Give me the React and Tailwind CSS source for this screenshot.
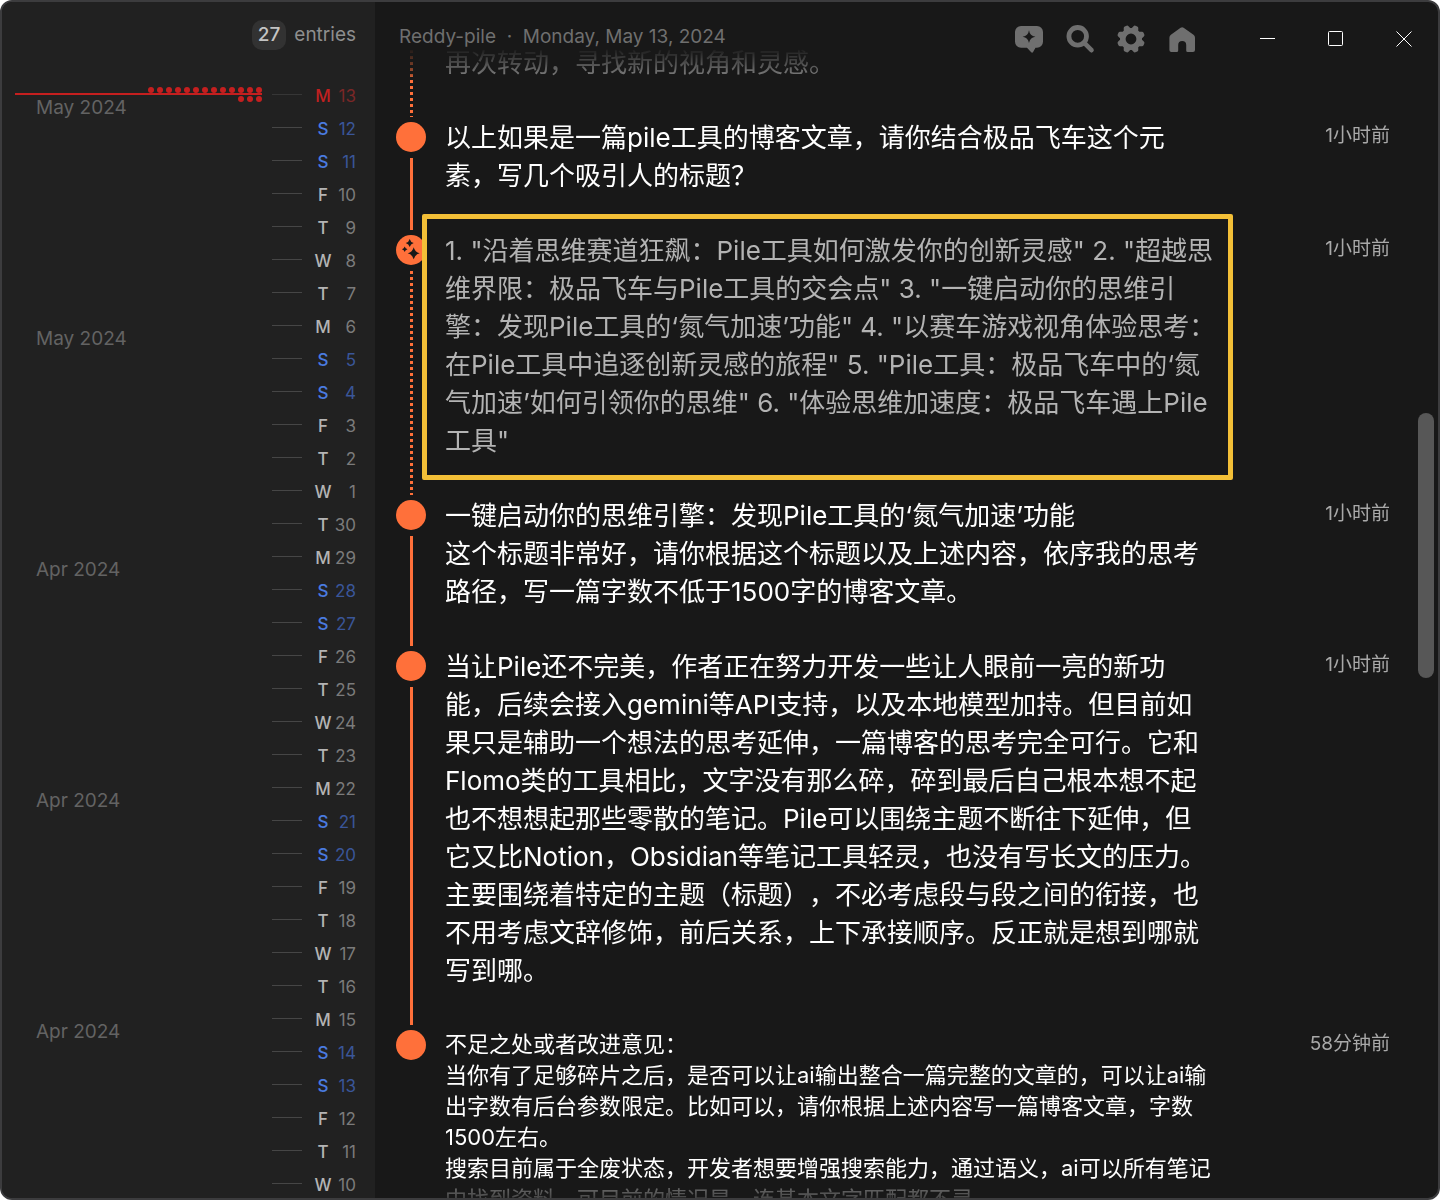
import React from 'react';

const days = [
  ['M', 13], ['S', 12], ['S', 11], ['F', 10], ['T', 9], ['W', 8], ['T', 7],
  ['M', 6], ['S', 5], ['S', 4], ['F', 3], ['T', 2], ['W', 1], ['T', 30],
  ['M', 29], ['S', 28], ['S', 27], ['F', 26], ['T', 25], ['W', 24], ['T', 23],
  ['M', 22], ['S', 21], ['S', 20], ['F', 19], ['T', 18], ['W', 17], ['T', 16],
  ['M', 15], ['S', 14], ['S', 13], ['F', 12], ['T', 11], ['W', 10],
];

const weeks = ['May 2024', 'May 2024', 'Apr 2024', 'Apr 2024', 'Apr 2024'].map((label, i) => ({
  label,
  days: days.slice(i * 7, i * 7 + 7),
}));

const posts = [
  {
    ai: true,
    continued: true,
    lines: ['再次转动，寻找新的视角和灵感。'],
  },
  {
    time: '1小时前',
    lines: ['以上如果是一篇pile工具的博客文章，请你结合极品飞车这个元', '素，写几个吸引人的标题？'],
  },
  {
    ai: true,
    time: '1小时前',
    highlighted: true,
    lines: [
      '1. "沿着思维赛道狂飙：Pile工具如何激发你的创新灵感" 2. "超越思',
      '维界限：极品飞车与Pile工具的交会点" 3. "一键启动你的思维引',
      '擎：发现Pile工具的‘氮气加速’功能" 4. "以赛车游戏视角体验思考：',
      '在Pile工具中追逐创新灵感的旅程" 5. "Pile工具：极品飞车中的‘氮',
      '气加速’如何引领你的思维" 6. "体验思维加速度：极品飞车遇上Pile',
      '工具"',
    ],
  },
  {
    time: '1小时前',
    lines: [
      '一键启动你的思维引擎：发现Pile工具的‘氮气加速’功能',
      '这个标题非常好，请你根据这个标题以及上述内容，依序我的思考',
      '路径，写一篇字数不低于1500字的博客文章。',
    ],
  },
  {
    time: '1小时前',
    lines: [
      '当让Pile还不完美，作者正在努力开发一些让人眼前一亮的新功',
      '能，后续会接入gemini等API支持，以及本地模型加持。但目前如',
      '果只是辅助一个想法的思考延伸，一篇博客的思考完全可行。它和',
      'Flomo类的工具相比，文字没有那么碎，碎到最后自己根本想不起',
      '也不想想起那些零散的笔记。Pile可以围绕主题不断往下延伸，但',
      '它又比Notion，Obsidian等笔记工具轻灵，也没有写长文的压力。',
      '主要围绕着特定的主题（标题），不必考虑段与段之间的衔接，也',
      '不用考虑文辞修饰，前后关系，上下承接顺序。反正就是想到哪就',
      '写到哪。',
    ],
  },
  {
    time: '58分钟前',
    small: true,
    last: true,
    lines: [
      '不足之处或者改进意见：',
      '当你有了足够碎片之后，是否可以让ai输出整合一篇完整的文章的，可以让ai输',
      '出字数有后台参数限定。比如可以，请你根据上述内容写一篇博客文章，字数',
      '1500左右。',
      '搜索目前属于全废状态，开发者想要增强搜索能力，通过语义，ai可以所有笔记',
      '中找到资料，可目前的情况是，连基本文字匹配都不灵',
    ],
  },
];

function ChatIcon() {
  return (
    <svg width="32" height="32" viewBox="0 0 32 32" fill="currentColor">
      <path
        fillRule="evenodd"
        d="M8 3h16a6 6 0 0 1 6 6v9.700a6 6 0 0 1-6 6h-1.500l-2.400 4.300q-.8 1.400-1.900.300l-4.200-4.600H8a6 6 0 0 1-6-6V9a6 6 0 0 1 6-6zM16 7.300q.8 5.600 6.400 6.400-5.600.8-6.400 6.400-.8-5.600-6.400-6.400 5.600-.8 6.400-6.400z"
      />
    </svg>
  );
}

function SearchIcon() {
  return (
    <svg width="32" height="32" viewBox="0 0 32 32" fill="none" stroke="currentColor" strokeLinecap="round">
      <circle cx="13.700" cy="13.300" r="8.800" strokeWidth="4.800" />
      <path d="M20.500 20.200l7 7" strokeWidth="4.600" />
    </svg>
  );
}

function GearIcon() {
  return (
    <svg width="32" height="32" viewBox="0 0 32 32" fill="currentColor">
      <circle cx="16" cy="16" r="8.200" fill="none" stroke="currentColor" strokeWidth="5.600" />
      {[22.5, 67.5, 112.5, 157.5, 202.5, 247.5, 292.5, 337.5].map((angle) => (
        <path key={angle} d="M11.800 7.500L13.400 3.200q.4-1.200 1.600-1.200h2q1.200 0 1.600 1.200l1.600 4.300z" transform={`rotate(${angle} 16 16)`} />
      ))}
    </svg>
  );
}

function HomeIcon() {
  return (
    <svg width="32" height="32" viewBox="0 0 32 32" fill="currentColor">
      <path d="M14.600 4.700q1.500-1.100 3 0l9.900 7q1.500 1.100 1.500 3V27q0 2-2 2h-5.200q-1.600 0-1.600-1.600V22a4 4 0 0 0-8 0v5.400q0 1.600-1.600 1.600H5.400q-2 0-2-2V14.700q0-1.900 1.500-3z" />
    </svg>
  );
}

function SparklesIcon() {
  return (
    <svg width="30" height="30" viewBox="0 0 30 30" fill="#181818">
      <path d="M17.700 12.300q1.200 4.800 6 6-4.800 1.200-6 6-1.200-4.800-6-6 4.800-1.200 6-6z" />
      <path d="M13.700 4q.8 3.200 4 4-3.200.8-4 4-.8-3.200-4-4 3.200-.8 4-4z" />
      <path d="M8.700 11.500q.6 2.200 2.800 2.800-2.200.6-2.800 2.800-.6-2.200-2.800-2.800 2.200-.6 2.800-2.800z" />
    </svg>
  );
}

function Day({ letter, date, today }) {
  const weekend = letter === 'S';
  const letterColor = today ? 'text-[#c22020]' : weekend ? 'text-[#4a7be0]' : 'text-[#b4b4b4]';
  const dateColor = today ? 'text-[#7a2727]' : weekend ? 'text-[#3a5699]' : 'text-[#7b7b7b]';

  return (
    <li className="flex h-[33px] items-center text-[17px] leading-6">
      <span className={`h-px w-[30px] ${today ? 'bg-[#363636]' : 'bg-[#464646]'}`} />
      <span className={`ml-3 w-[18px] pt-0.5 text-center font-medium ${letterColor}`}>{letter}</span>
      <span className={`w-6 pt-0.5 text-right ${dateColor}`}>{date}</span>
    </li>
  );
}

function Sidebar() {
  return (
    <aside className="relative flex w-[373px] shrink-0 flex-col overflow-hidden bg-[#212121]">
      <div className="flex h-[76px] shrink-0 items-start justify-end gap-2 pt-[18px] pr-[19px] text-[19px] leading-[30px] text-[#8e8e8e]">
        <span className="rounded-[10px] bg-[#323232] px-1.5 font-medium text-[#c4c4c4]">27</span>
        <span>entries</span>
      </div>

      {weeks.map((week, i) => (
        <section key={i} className="flex shrink-0 justify-between pr-[19px] pl-[34px]">
          <h2 className="pt-4 text-[19px] leading-7 text-[#636363]">{week.label}</h2>
          <ul className="w-[84px]">
            {week.days.map(([letter, date], n) => (
              <Day key={n} letter={letter} date={date} today={i === 0 && n === 0} />
            ))}
          </ul>
        </section>
      ))}

      {/* Scroll marker with a dot for each entry of the day */}
      <svg className="absolute top-[84px] left-[13px]" width="248" height="18" viewBox="0 0 248 18" fill="#c51f1f">
        <rect y="7" width="247" height="2" />
        {Array.from({ length: 13 }, (_, i) => (
          <circle key={i} cx={136 + i * 9} cy="4" r="3" />
        ))}
        {[226, 235, 244].map((x) => (
          <circle key={x} cx={x} cy="13" r="3" />
        ))}
      </svg>
    </aside>
  );
}

function Header() {
  return (
    <header className="flex h-[42px] shrink-0 items-start justify-between pt-[21px] pl-6 text-[#6f6f6f]">
      <h1 className="text-[19px] leading-7 whitespace-nowrap">Reddy-pile&nbsp; ·&nbsp; Monday, May 13, 2024</h1>
      <div className="flex">
        <nav className="flex gap-[19px] pr-9">
          <button aria-label="Chat"><ChatIcon /></button>
          <button aria-label="Search"><SearchIcon /></button>
          <button aria-label="Settings"><GearIcon /></button>
          <button aria-label="Home"><HomeIcon /></button>
        </nav>

        {/* Window controls */}
        <div className="flex text-white">
          <button aria-label="Minimize" className="flex h-8 w-[68px] items-center justify-center">
            <svg width="16" height="16" viewBox="0 0 16 16" stroke="currentColor"><path d="M0 7.500h15" /></svg>
          </button>
          <button aria-label="Maximize" className="flex h-8 w-[68px] items-center justify-center">
            <svg width="16" height="16" viewBox="0 0 16 16" fill="none" stroke="currentColor"><rect x=".5" y=".5" width="14" height="14" rx="1" /></svg>
          </button>
          <button aria-label="Close" className="flex h-8 w-[68px] items-center justify-center">
            <svg width="16" height="16" viewBox="0 0 16 16" stroke="currentColor"><path d="M.5.5l15 15M15.500.5l-15 15" /></svg>
          </button>
        </div>
      </div>
    </header>
  );
}

function Post({ post }) {
  return (
    <article className="relative flex">
      <div className="flex w-[30px] shrink-0 flex-col gap-1.5 pb-0.5">
        {!post.continued && (
          <span className="mt-[3px] size-[30px] shrink-0 rounded-full bg-[#ff703a]">{post.ai && <SparklesIcon />}</span>
        )}
        {!post.last && (
          <span
            className={`ml-3.5 w-[3px] grow ${post.ai ? 'bg-[repeating-linear-gradient(to_bottom,#ff703a_0_3px,transparent_3px_6px)]' : 'bg-[#ff703a]'}`}
          />
        )}
      </div>
      <p
        className={`ml-[19px] pb-[37px] whitespace-nowrap ${post.small ? 'pt-0.5 text-[22px] leading-[31px]' : 'text-[26px] leading-[38px]'} ${post.ai ? 'text-[#b3b3b3]' : 'text-white'}`}
      >
        {post.lines.map((line) => (
          <span key={line} className="block">{line}</span>
        ))}
      </p>
      <time className="ml-auto text-[19px] leading-[34px] text-[#a9a9a9]">{post.time}</time>
      {post.highlighted && (
        <div className="absolute -top-[18px] bottom-[17px] left-[26px] w-[811px] rounded-[2px] border-[5px] border-[#f3bf37]" />
      )}
    </article>
  );
}

export default function App() {
  return (
    <div className="relative flex h-screen overflow-hidden rounded-xl border-2 border-[#3c3c3e] bg-[#181818] font-[Inter,'Noto_Sans_CJK_SC',sans-serif] [text-spacing-trim:space-all]">
      <Sidebar />
      <main className="flex min-w-0 grow flex-col">
        <Header />
        {/* Entries fade out under the header and at the bottom edge */}
        <div className="min-h-0 grow overflow-hidden pr-12 pl-[21px] [mask-image:linear-gradient(to_bottom,transparent_4px,#0009_30px,black_36px,black_calc(100%-20px),#0006_calc(100%-14px),#0003)]">
          {posts.map((post, i) => (
            <Post key={i} post={post} />
          ))}
        </div>
      </main>
      <div className="absolute top-[411px] right-1 h-[265px] w-4 rounded-full bg-[#575757]" />
    </div>
  );
}
